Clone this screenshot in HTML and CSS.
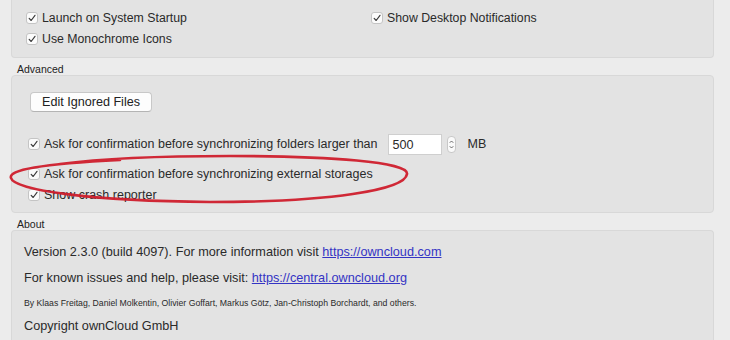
FILE: index.html
```html
<!DOCTYPE html>
<html>
<head>
<meta charset="utf-8">
<link rel="stylesheet" href="styles.css">
</head>
<body>
<div class="window">
  <section class="panel panel-general">
    <div class="general-grid">
      <label class="check-row"><span class="cb"><svg viewBox="0 0 12 12"><path d="M2.6 6.4 L5 9 L9.6 2.8"/></svg></span>Launch on System Startup</label>
      <label class="check-row"><span class="cb"><svg viewBox="0 0 12 12"><path d="M2.6 6.4 L5 9 L9.6 2.8"/></svg></span>Show Desktop Notifications</label>
      <label class="check-row"><span class="cb"><svg viewBox="0 0 12 12"><path d="M2.6 6.4 L5 9 L9.6 2.8"/></svg></span>Use Monochrome Icons</label>
    </div>
  </section>

  <div class="group-title">Advanced</div>
  <section class="panel panel-advanced">
    <div class="btn-row"><button class="btn">Edit Ignored Files</button></div>
    <div class="check-row spin-row">
      <span class="cb"><svg viewBox="0 0 12 12"><path d="M2.6 6.4 L5 9 L9.6 2.8"/></svg></span>
      <span class="spin-label">Ask for confirmation before synchronizing folders larger than</span>
      <span class="spin-input">500</span>
      <span class="stepper"><svg viewBox="0 0 8 16"><path d="M2 6 L4 4 L6 6 M2 10 L4 12 L6 10"/></svg></span>
      <span class="unit">MB</span>
    </div>
    <label class="check-row"><span class="cb"><svg viewBox="0 0 12 12"><path d="M2.6 6.4 L5 9 L9.6 2.8"/></svg></span>Ask for confirmation before synchronizing external storages</label>
    <label class="check-row"><span class="cb"><svg viewBox="0 0 12 12"><path d="M2.6 6.4 L5 9 L9.6 2.8"/></svg></span>Show crash reporter</label>
  </section>

  <div class="group-title">About</div>
  <section class="panel panel-about">
    <p class="about-line first">Version 2.3.0 (build 4097). For more information visit <a href="#">https://owncloud.com</a></p>
    <p class="about-line">For known issues and help, please visit: <a href="#">https://central.owncloud.org</a></p>
    <p class="about-line small">By Klaas Freitag, Daniel Molkentin, Olivier Goffart, Markus Götz, Jan-Christoph Borchardt, and others.</p>
    <p class="about-line">Copyright ownCloud GmbH</p>
  </section>

  <svg class="annotation" viewBox="0 0 730 340" width="730" height="340">
    <path d="M120 160 C 40 164, 8 170, 11 178 C 14 190, 90 201, 210 202 C 330 202, 405 190, 407 174 C 409 162, 330 156, 230 156 C 150 156, 90 160, 60 164"/>
  </svg>
</div>
</body>
</html>
```

FILE: styles.css
```css
* { box-sizing: border-box; }

html, body {
  margin: 0;
  padding: 0;
  background: #ececec;
}

body {
  width: 730px;
  height: 340px;
  overflow: hidden;
  font-family: "Liberation Sans", Arial, sans-serif;
  font-size: 12.5px;
  color: #2a2a2a;
}

.window {
  position: relative;
  display: flex;
  flex-direction: column;
  padding: 0 16px 0 11px;
  width: 730px;
  height: 340px;
}

.panel {
  background: #e3e3e3;
  border: 1px solid #d8d8d8;
  border-radius: 4px;
}

.panel-general {
  margin-top: -4px;
  padding: 10px 0 8px 14px;
  border-top-color: transparent;
  border-radius: 0 0 4px 4px;
}

.panel-general .check-row {
  font-size: 12.3px;
}

.general-grid {
  display: grid;
  grid-template-columns: 345px 1fr;
  grid-auto-rows: 21px;
}

.check-row {
  display: flex;
  align-items: center;
  height: 21px;
  white-space: nowrap;
}

.cb {
  width: 12px;
  height: 12px;
  flex: none;
  margin-right: 4px;
  background: #fbfbfb;
  border: 1px solid #c4c4c4;
  border-radius: 3px;
  display: inline-flex;
}

.cb svg {
  width: 10px;
  height: 10px;
}

.cb path {
  fill: none;
  stroke: #3a3a3a;
  stroke-width: 1.4;
  stroke-linecap: round;
  stroke-linejoin: round;
}

.group-title {
  height: 18px;
  padding: 5px 0 0 6px;
  font-size: 10.5px;
  color: #222;
}

.panel-advanced {
  padding: 16px 0 7px 15px;
}

.btn-row {
  display: flex;
  padding-left: 3px;
  margin-bottom: 21px;
}

.btn {
  font: inherit;
  font-size: 12.6px;
  color: #222;
  width: 122px;
  height: 20px;
  padding: 0;
  background: #fdfdfd;
  border: 1px solid #c8c8c8;
  border-bottom-color: #b4b4b4;
  border-radius: 4px;
}

.panel-advanced .check-row {
  padding-left: 1px;
}

.spin-row {
  height: 22px !important;
  margin-bottom: 8px;
}

.spin-label {
  margin-right: 10px;
}

.spin-input {
  width: 54px;
  height: 21px;
  background: #fff;
  border: 1px solid #cfcfcf;
  padding: 3px 0 0 4px;
  font-size: 12.6px;
}

.stepper {
  width: 9px;
  height: 17px;
  margin-left: 5px;
  background: #fafafa;
  border: 1px solid #c8c8c8;
  border-radius: 4px;
  display: inline-flex;
}

.stepper svg {
  width: 7px;
  height: 15px;
}

.stepper path {
  fill: none;
  stroke: #555;
  stroke-width: 1;
}

.unit {
  margin-left: 12px;
}

.panel-about {
  flex: 1;
  padding: 13px 0 0 12px;
  border-bottom: none;
  border-radius: 4px 4px 0 0;
}

.about-line {
  margin: 0;
  height: 25px;
  line-height: 16px;
  font-size: 12.7px;
  white-space: nowrap;
}

.about-line.first {
  height: 26px;
}

.about-line.small {
  font-size: 8.7px;
  height: 23px;
  line-height: 17px;
}

.about-line a {
  color: #3434c4;
  text-decoration: underline;
}

.annotation {
  position: absolute;
  left: 0;
  top: 0;
  pointer-events: none;
}

.annotation path {
  fill: none;
  stroke: #cf1d2c;
  stroke-width: 2.6;
  stroke-linecap: round;
  opacity: 0.95;
}
```
